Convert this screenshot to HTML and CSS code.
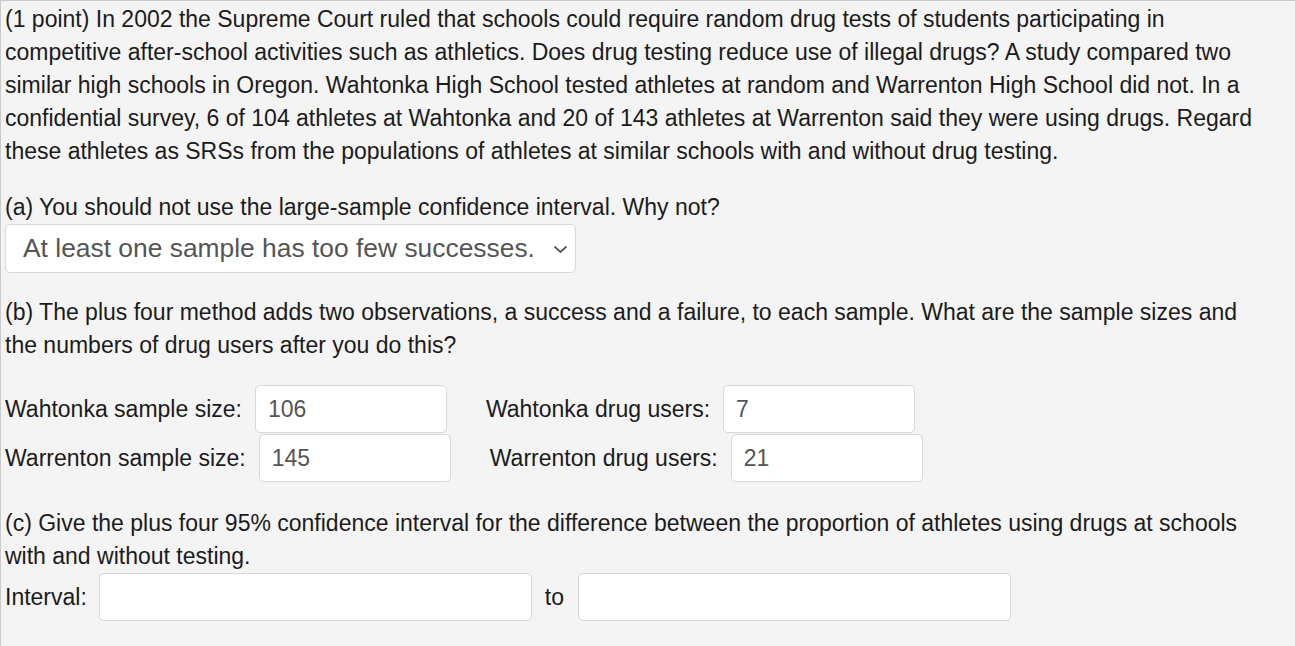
FILE: index.html
```html
<!DOCTYPE html>
<html>
<head>
<meta charset="utf-8">
<link rel="stylesheet" href="styles.css">
</head>
<body>
<div class="problem">
  <p class="text intro">(1 point) In 2002 the Supreme Court ruled that schools could require random drug tests of students participating in<br>competitive after-school activities such as athletics. Does drug testing reduce use of illegal drugs? A study compared two<br>similar high schools in Oregon. Wahtonka High School tested athletes at random and Warrenton High School did not. In a<br>confidential survey, 6 of 104 athletes at Wahtonka and 20 of 143 athletes at Warrenton said they were using drugs. Regard<br>these athletes as SRSs from the populations of athletes at similar schools with and without drug testing.</p>

  <p class="text part-a">(a) You should not use the large-sample confidence interval. Why not?</p>
  <div class="select">
    <span class="select-text">At least one sample has too few successes.</span>
    <svg class="chev" width="15" height="9" viewBox="0 0 15 9"><path d="M1.5 1.5 L7.5 7 L13.5 1.5" fill="none" stroke="#555" stroke-width="1.7"/></svg>
  </div>

  <p class="text part-b">(b) The plus four method adds two observations, a success and a failure, to each sample. What are the sample sizes and<br>the numbers of drug users after you do this?</p>
  <div class="rows">
    <div class="row">
      <span class="label">Wahtonka sample size:</span>
      <span class="field">106</span>
      <span class="label second">Wahtonka drug users:</span>
      <span class="field">7</span>
    </div>
    <div class="row">
      <span class="label">Warrenton sample size:</span>
      <span class="field">145</span>
      <span class="label second">Warrenton drug users:</span>
      <span class="field">21</span>
    </div>
  </div>

  <p class="text part-c">(c) Give the plus four 95% confidence interval for the difference between the proportion of athletes using drugs at schools<br>with and without testing.</p>
  <div class="row interval">
    <span class="label">Interval:</span>
    <span class="field wide"></span>
    <span class="label to">to</span>
    <span class="field wide"></span>
  </div>
</div>
</body>
</html>
```

FILE: styles.css
```css
html, body {
  margin: 0;
  padding: 0;
  background: #f4f4f4;
}
.problem {
  box-sizing: border-box;
  width: 1295px;
  height: 646px;
  border-left: 1px solid #c9c9c9;
  border-top: 1px solid #c9c9c9;
  background: #f4f4f4;
  padding: 2px 4px 0 4px;
  font-family: "Liberation Sans", Arial, sans-serif;
  font-size: 23px;
  color: #1b1b1b;
  white-space: nowrap;
}
.text {
  margin: 0;
  line-height: 33px;
}
.part-a { margin-top: 23px; }
.part-b { margin-top: 23px; }
.part-c { margin-top: 25px; }
.select {
  box-sizing: border-box;
  width: 571px;
  height: 49px;
  background: #fff;
  border: 1px solid #d8d8d8;
  border-radius: 5px;
  display: flex;
  align-items: center;
  justify-content: space-between;
  padding: 0 7px 0 17px;
  color: #555;
  font-size: 26.4px;
}
.chev { margin-top: 1px; }
.rows {
  margin-top: 23px;
  display: flex;
  flex-direction: column;
  gap: 1px;
}
.row {
  display: flex;
  align-items: center;
  height: 48px;
}
.label {
  white-space: nowrap;
}
.second {
  margin-left: 39px;
}
.field {
  box-sizing: border-box;
  width: 192px;
  height: 48px;
  margin-left: 13px;
  background: #fff;
  border: 1px solid #d8d8d8;
  border-radius: 5px;
  padding-left: 12px;
  color: #555;
  display: flex;
  align-items: center;
}
.interval {
  margin-top: 0;
}
.wide {
  width: 433px;
  margin-left: 12px;
}
.to {
  margin-left: 13px;
}
.to + .wide {
  margin-left: 14px;
}
```
